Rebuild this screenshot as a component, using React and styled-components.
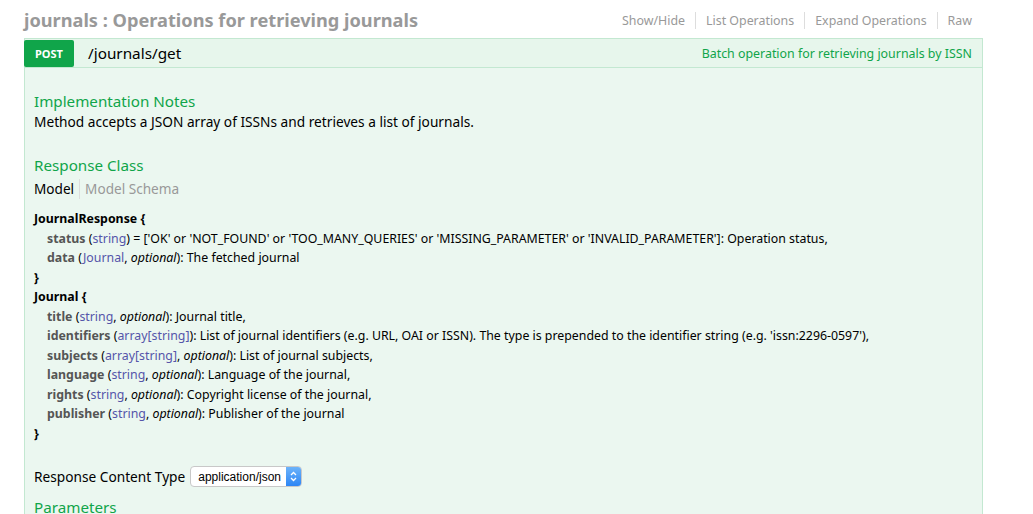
import React from 'react';
import styled, { createGlobalStyle } from 'styled-components';

const GlobalStyle = createGlobalStyle`
  body {
    margin: 0;
    background: #fff;
    font-family: "Noto Sans", "Open Sans", sans-serif;
    color: #000;
  }
`;

const Wrap = styled.div`
  padding: 1px 50px 0 24px;
  width: 959px;
`;

const ResourceHeading = styled.div`
  display: flex;
  align-items: center;
  justify-content: space-between;
  height: 37px;
`;

const ResourceTitle = styled.h2`
  margin: 0;
  font-size: 18.2px;
  font-weight: 700;
  color: #999;
`;

const Links = styled.ul`
  display: flex;
  list-style: none;
  margin: 2px 0 0;
  padding: 0 11px 0 0;
  font-size: 12.4px;
  color: #999;
`;

const LinkItem = styled.li`
  padding: 0 10px;
  border-left: ${(p) => (p.$first ? 'none' : '1px solid #ddd')};
  &:last-child {
    padding-right: 0;
  }
`;

const Operation = styled.div`
  border: 1px solid #c3e8d1;
  border-bottom: none;
`;

const OpHeading = styled.div`
  display: flex;
  align-items: center;
  height: 28px;
  background: #e7f6ec;
  border-bottom: 1px solid #c3e8d1;
`;

const Method = styled.span`
  display: flex;
  align-items: center;
  justify-content: center;
  width: 50px;
  height: 27px;
  margin-left: -1px;
  background: #10a54a;
  color: #fff;
  font-size: 11px;
  font-weight: 700;
  border-radius: 2px;
`;

const Path = styled.span`
  margin-left: 14px;
  font-size: 15.3px;
  flex: 1;
`;

const Summary = styled.span`
  color: #10a54a;
  font-size: 12.4px;
  padding-right: 10px;
`;

const Content = styled.div`
  background: #ebf7f0;
  padding: 22px 9px 0;
`;

const SectionTitle = styled.h4`
  margin: 0;
  color: #10a54a;
  font-size: 15.2px;
  font-weight: 400;
  line-height: 22px;
`;

const Notes = styled.p`
  margin: 0 0 22px;
  font-size: 13.7px;
  line-height: 20px;
`;

const Tabs = styled.div`
  display: flex;
  font-size: 13.6px;
  margin: 3px 0 10px;
  line-height: 20px;
`;

const Tab = styled.span`
  color: ${(p) => (p.$active ? '#000' : '#999')};
  padding: 0 5px 0 ${(p) => (p.$active ? '0' : '5px')};
  border-left: ${(p) => (p.$active ? 'none' : '1px solid #ddd')};
`;

const Model = styled.div`
  font-size: 12.35px;
  line-height: 19.5px;
  color: #000;
`;

const ModelName = styled.div`
  font-weight: 700;
`;

const Prop = styled.div`
  padding-left: 13px;
`;

const PropName = styled.span`
  font-weight: 700;
  color: #555;
`;

const PropType = styled.span`
  color: #55a;
`;

const ContentType = styled.div`
  display: flex;
  align-items: center;
  gap: 5px;
  margin-top: 23px;
  font-size: 13.7px;
`;

const Select = styled.div`
  display: flex;
  align-items: center;
  width: 110px;
  height: 19px;
  border: 1px solid #c8c8c8;
  border-radius: 4px;
  background: #fff;
  font-family: "Liberation Sans", Arial, sans-serif;
  font-size: 12px;
  overflow: hidden;
`;

const SelectText = styled.span`
  flex: 1;
  padding-left: 7px;
`;

const SelectArrow = styled.span`
  display: flex;
  align-items: center;
  justify-content: center;
  width: 15px;
  height: 100%;
  background: linear-gradient(#6cb3fa, #2d86f5);
`;

const Param = styled(SectionTitle)`
  margin-top: 9px;
`;

const Type = ({ t, opt }) => (
  <>
    (<PropType>{t}</PropType>
    {opt && (
      <>
        , <i>optional</i>
      </>
    )}
    )
  </>
);

export default function App() {
  return (
    <>
      <GlobalStyle />
      <Wrap>
        <ResourceHeading>
          <ResourceTitle>journals : Operations for retrieving journals</ResourceTitle>
          <Links>
            <LinkItem $first>Show/Hide</LinkItem>
            <LinkItem>List Operations</LinkItem>
            <LinkItem>Expand Operations</LinkItem>
            <LinkItem>Raw</LinkItem>
          </Links>
        </ResourceHeading>
        <Operation>
          <OpHeading>
            <Method>POST</Method>
            <Path>/journals/get</Path>
            <Summary>Batch operation for retrieving journals by ISSN</Summary>
          </OpHeading>
          <Content>
            <SectionTitle>Implementation Notes</SectionTitle>
            <Notes>Method accepts a JSON array of ISSNs and retrieves a list of journals.</Notes>
            <SectionTitle>Response Class</SectionTitle>
            <Tabs>
              <Tab $active>Model</Tab>
              <Tab>Model Schema</Tab>
            </Tabs>
            <Model>
              <ModelName>JournalResponse {'{'}</ModelName>
              <Prop>
                <PropName>status</PropName> <Type t="string" /> = ['OK' or 'NOT_FOUND' or
                'TOO_MANY_QUERIES' or 'MISSING_PARAMETER' or 'INVALID_PARAMETER']: Operation status,
              </Prop>
              <Prop>
                <PropName>data</PropName> <Type t="Journal" opt />: The fetched journal
              </Prop>
              <ModelName>{'}'}</ModelName>
              <ModelName>Journal {'{'}</ModelName>
              <Prop>
                <PropName>title</PropName> <Type t="string" opt />: Journal title,
              </Prop>
              <Prop>
                <PropName>identifiers</PropName> <Type t="array[string]" />: List of journal
                identifiers (e.g. URL, OAI or ISSN). The type is prepended to the identifier string
                (e.g. 'issn:2296-0597'),
              </Prop>
              <Prop>
                <PropName>subjects</PropName> <Type t="array[string]" opt />: List of journal
                subjects,
              </Prop>
              <Prop>
                <PropName>language</PropName> <Type t="string" opt />: Language of the journal,
              </Prop>
              <Prop>
                <PropName>rights</PropName> <Type t="string" opt />: Copyright license of the
                journal,
              </Prop>
              <Prop>
                <PropName>publisher</PropName> <Type t="string" opt />: Publisher of the journal
              </Prop>
              <ModelName>{'}'}</ModelName>
            </Model>
            <ContentType>
              Response Content Type
              <Select>
                <SelectText>application/json</SelectText>
                <SelectArrow>
                  <svg width="7" height="11" viewBox="0 0 7 11">
                    <path d="M1 4 L3.5 1.5 L6 4 M1 7 L3.5 9.5 L6 7" fill="none" stroke="#fff" strokeWidth="1.3" />
                  </svg>
                </SelectArrow>
              </Select>
            </ContentType>
            <Param>Parameters</Param>
          </Content>
        </Operation>
      </Wrap>
    </>
  );
}
